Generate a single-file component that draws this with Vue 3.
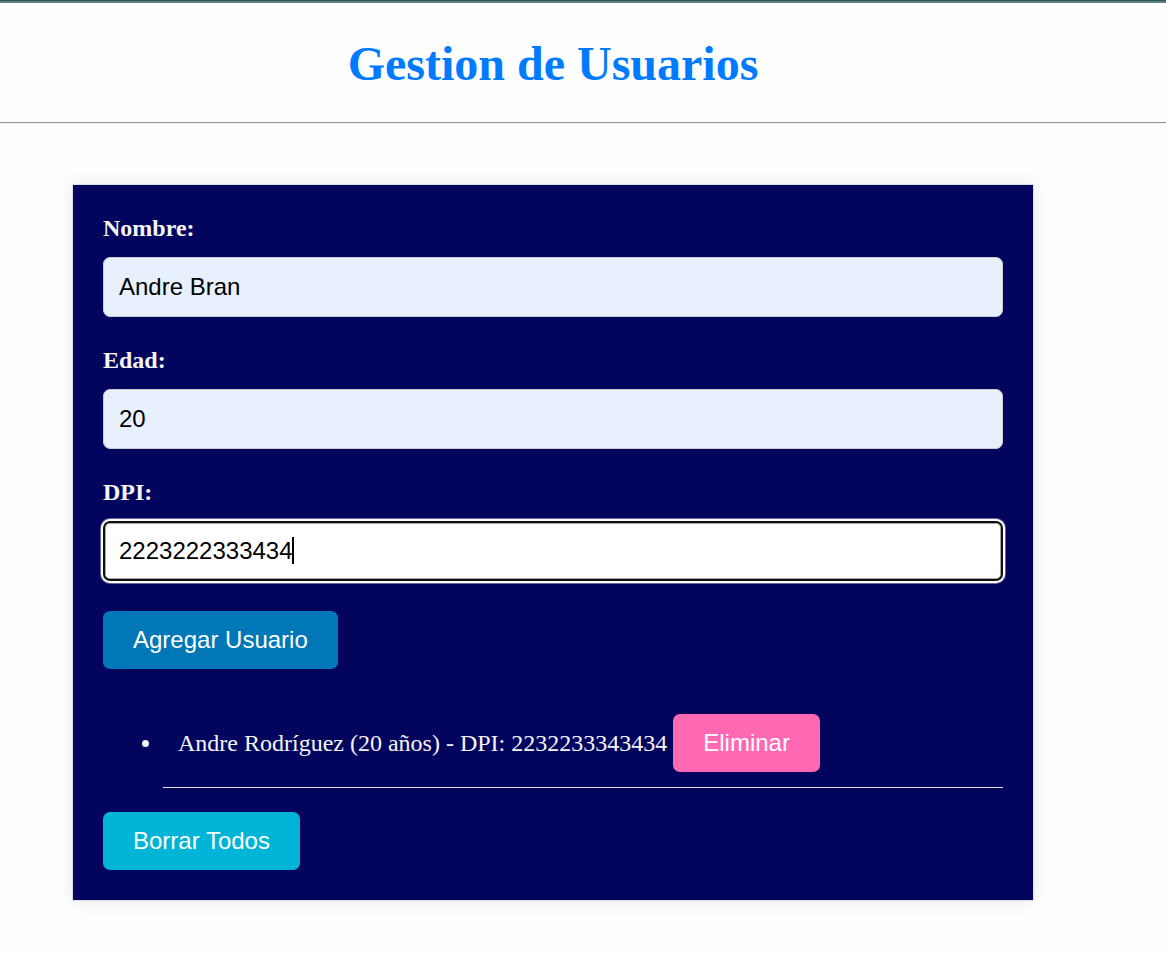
<script setup>
import { computed, reactive, ref } from 'vue'

const form = reactive({ nombre: 'Andre Bran', edad: '20', dpi: '2223222333434' })
const users = ref([{ nombre: 'Andre Rodríguez', edad: '20', dpi: '2232233343434' }])

const caretStyle = computed(() => ({ left: `calc(15px + ${form.dpi.length}ch)` }))

function addUser() {
  if (form.nombre && form.edad && form.dpi) users.value.push({ ...form })
}

function removeUser(index) {
  users.value.splice(index, 1)
}

function clearUsers() {
  users.value = []
}
</script>

<template>
  <div class="page">
    <header class="header">
      <h1>Gestion de Usuarios</h1>
    </header>
    <main class="content">
      <section class="card">
        <form class="form" @submit.prevent="addUser">
          <div class="field">
            <label for="nombre">Nombre:</label>
            <input id="nombre" v-model="form.nombre" class="filled" type="text" />
          </div>
          <div class="field">
            <label for="edad">Edad:</label>
            <input id="edad" v-model="form.edad" class="filled" type="text" inputmode="numeric" />
          </div>
          <div class="field">
            <label for="dpi">DPI:</label>
            <div class="active">
              <input id="dpi" v-model="form.dpi" type="text" inputmode="numeric" />
              <span class="caret" :style="caretStyle"></span>
            </div>
          </div>
          <button class="add" type="submit">Agregar Usuario</button>
        </form>
        <ul class="users">
          <li v-for="(user, index) in users" :key="index">
            {{ user.nombre }} ({{ user.edad }} años) - DPI: {{ user.dpi }}
            <button class="remove" type="button" @click="removeUser(index)">Eliminar</button>
          </li>
        </ul>
        <button class="clear" type="button" @click="clearUsers">Borrar Todos</button>
      </section>
    </main>
  </div>
</template>

<style>
body {
  margin: 0;
  background: #fefefe;
}
</style>

<style scoped>
.page {
  font-family: "Liberation Serif", "Times New Roman", serif;
  font-size: 24px;
  line-height: 27px;
  border-top: 1px solid #2f5556;
}

.header {
  border-top: 2px solid #5f8182;
  border-bottom: 1px solid #969696;
  box-shadow: 0 1px 0 #eeeeee;
  padding: 33px 60px 31px 0;
}

h1 {
  margin: 0;
  font-size: 48px;
  line-height: 55px;
  text-align: center;
  color: #007bff;
}

.content {
  padding: 62px 60px 52px 0;
}

.card {
  box-sizing: border-box;
  max-width: 960px;
  margin: 0 auto;
  padding: 30px;
  background: #03045e;
  color: #f4f4f4;
  box-shadow: 0 0 0 1px #dddddd, 0 0 16px rgba(0, 0, 0, 0.1);
}

.form {
  display: flex;
  flex-direction: column;
  align-items: flex-start;
  gap: 30px;
}

.field {
  display: flex;
  flex-direction: column;
  gap: 15px;
  width: 100%;
}

label {
  font-weight: bold;
}

input {
  box-sizing: border-box;
  width: 100%;
  height: 60px;
  padding: 0 15px;
  border: 1px solid #cccccc;
  border-radius: 7px;
  background: #ffffff;
  color: #000000;
  font-family: "Liberation Sans", Arial, sans-serif;
  font-size: 24px;
  outline: none;
}

.filled {
  background: #e8f0fe;
}

.active {
  position: relative;
  display: flex;
  font-family: "Liberation Sans", Arial, sans-serif;
}

.active input {
  padding: 0 14px;
  border: 2px solid #101010;
  box-shadow: inset 0 0 0 1px #a8a8a8, 0 0 0 2px #ffffff, 0 0 0 3px rgba(255, 255, 255, 0.4);
  caret-color: transparent;
}

.caret {
  position: absolute;
  top: 16px;
  width: 2px;
  height: 27px;
  background: #000000;
}

button {
  height: 58px;
  padding: 0 30px;
  border: none;
  border-radius: 7px;
  color: #ffffff;
  font-family: "Liberation Sans", Arial, sans-serif;
  font-size: 24px;
  cursor: pointer;
}

.add {
  background: #0077b6;
}

.users {
  margin: 30px 0 24px;
  padding: 0 0 0 60px;
}

.users li {
  padding: 15px;
  border-bottom: 1px solid #dddddd;
}

.remove {
  background: #ff69b4;
}

.clear {
  display: block;
  background: #00b4d8;
}
</style>
